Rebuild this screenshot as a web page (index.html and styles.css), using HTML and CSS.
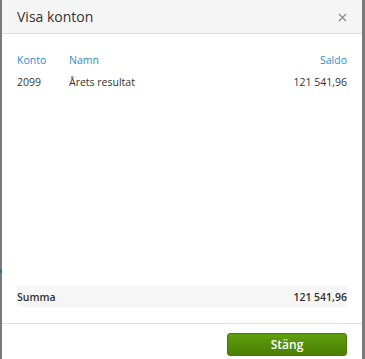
FILE: index.html
```html
<!DOCTYPE html>
<html>
	<head>
		<link rel="stylesheet" href="styles.css">
	</head>
	<body>
		<div class="backdrop">
			<div class="edge"><span class="edgemark"></span></div>
			<div class="modal">
				<div class="modalhead">
					<span class="title">Visa konton</span>
					<svg class="close" width="9" height="9" viewBox="0 0 9 9"><path d="M1 1 L8 8 M8 1 L1 8" stroke="#8a8a8a" stroke-width="1.2" fill="none"/></svg>
				</div>
				<div class="modalbody">
					<table class="konton">
						<thead>
							<tr>
								<th class="colnr">Konto</th>
								<th>Namn</th>
								<th class="num">Saldo</th>
							</tr>
						</thead>
						<tbody>
							<tr>
								<td class="colnr">2099</td>
								<td>Årets resultat</td>
								<td class="num">121 541,96</td>
							</tr>
						</tbody>
					</table>
					<div class="spacer"></div>
					<div class="summa">
						<span>Summa</span>
						<span>121 541,96</span>
					</div>
				</div>
				<div class="modalfoot">
					<input type="button" class="gbutton" value="Stäng" />
				</div>
			</div>
			<div class="edge"></div>
		</div>
	</body>
</html>
```
FILE: styles.css
```css
html, body {
	margin: 0; padding: 0; height: 100%; overflow: hidden;
}
body {
	background: #7a7a7a; font-family: "Open Sans", "Noto Sans", sans-serif; color: #333;
}
.backdrop {
	display: flex; height: 359px;
}
.edge {
	width: 2px; display: flex; flex-direction: column;
}
.edge:last-child {
	width: 3px;
}
.edgemark {
	margin-top: 269px; height: 4px; background: #2a6ea6;
}
.modal {
	width: 360px; height: 359px; background: #fff; display: flex; flex-direction: column;
}
.modalhead {
	height: 33px; background: #f5f5f5; border-bottom: 1px solid #dedede;
	display: flex; align-items: center; justify-content: space-between; padding: 0 15px;
}
.title {
	font-size: 14px; color: #333;
}
.close {
	margin-right: 0px; margin-top: 1px;
}
.modalbody {
	flex: 1; display: flex; flex-direction: column; padding: 15px 15px 16px 15px;
}
.konton {
	width: 100%; border-collapse: collapse; font-size: 10.5px;
}
.konton th, .konton td {
	padding: 0; height: 22px; text-align: left; font-weight: normal;
}
.konton th {
	color: #2f8bcb;
}
.colnr {
	width: 52px;
}
.num {
	text-align: right !important;
}
.spacer {
	flex: 1;
}
.summa {
	height: 21px; background: #f6f6f6; display: flex; align-items: center; justify-content: space-between;
	font-size: 10.5px; font-weight: 600; color: #333;
}
.modalfoot {
	border-top: 1px solid #e2e2e2; padding: 9px 15px 0 15px; height: 26px;
	display: flex; justify-content: flex-end;
}
.gbutton {
	width: 120px; height: 23px; margin: 0; border: 1px solid #457a05; border-radius: 3px;
	background: linear-gradient(#5f9e0d, #4b7f04); color: #fff;
	font-family: "Open Sans", "Noto Sans", sans-serif; font-size: 12px; font-weight: 600;
}
```
